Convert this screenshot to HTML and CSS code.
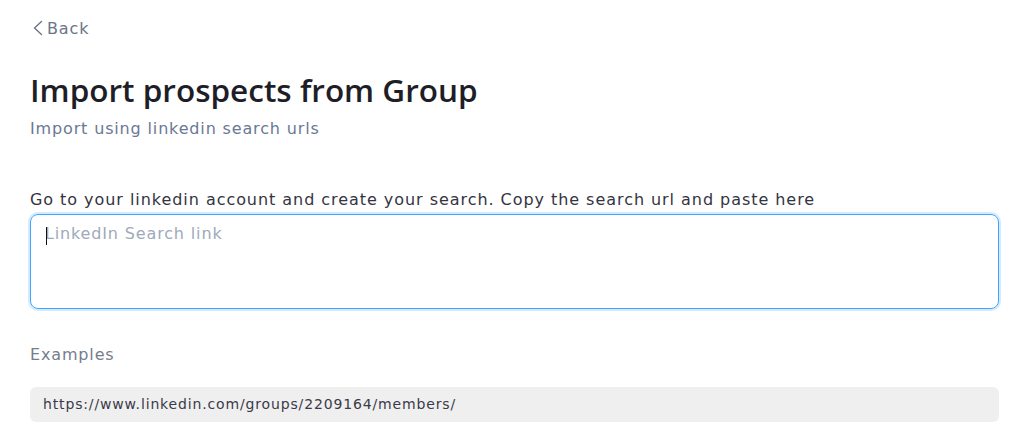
FILE: index.html
```html
<!DOCTYPE html>
<html lang="en">
<head>
    <meta charset="UTF-8">
    <meta name="viewport" content="width=device-width, initial-scale=1.0">
    <title>Import prospects from Group</title>
    <link rel="stylesheet" href="styles.css">
</head>
<body>
<div class="page">
    <a class="back-link" href="#">
        <svg width="12" height="16" viewBox="0 0 12 16" fill="none" stroke="currentColor" stroke-width="1.4" stroke-linecap="round" stroke-linejoin="round">
            <path d="M9.5 1.5 L2.5 8 L9.5 14.5"/>
        </svg>
        <span>Back</span>
    </a>

    <h1 class="page-title">Import prospects from Group</h1>
    <p class="page-subtitle">Import using linkedin search urls</p>

    <label class="field-label" for="search-link">Go to your linkedin account and create your search. Copy the search url and paste here</label>
    <div class="field-box">
        <span class="caret"></span>
        <span class="placeholder">LinkedIn Search link</span>
    </div>

    <p class="examples-title">Examples</p>
    <div class="example-item">https://www.linkedin.com/groups/2209164/members/</div>
</div>
</body>
</html>
```

FILE: styles.css
```css
body {
    margin: 0;
    padding: 0;
    background: #ffffff;
    font-family: "DejaVu Sans", "Noto Sans", sans-serif;
    letter-spacing: 0.85px;
}
.page {
    padding: 16px 33px 0 30px;
}
.back-link {
    display: flex;
    align-items: center;
    gap: 3px;
    color: #6b7589;
    text-decoration: none;
    font-size: 16px;
    height: 24px;
    padding-left: 2px;
}
.page-title {
    margin: 30px 0 0 0;
    font-family: "Open Sans", "Noto Sans", sans-serif;
    font-size: 31.5px;
    font-weight: 600;
    letter-spacing: 0;
    color: #1e1e28;
    line-height: 40px;
}
.page-subtitle {
    margin: 7px 0 0 0;
    font-size: 16px;
    color: #6b7894;
    line-height: 24px;
}
.field-label {
    display: block;
    margin-top: 47px;
    font-size: 16px;
    letter-spacing: 0.95px;
    color: #34343f;
    line-height: 24px;
}
.field-box {
    position: relative;
    margin-top: 2px;
    height: 95px;
    border: 1px solid #3ea6ff;
    border-radius: 8px;
    box-shadow: 0 0 0 2px #d4ebff;
    padding: 8px 14px;
    box-sizing: border-box;
}
.placeholder {
    font-size: 16px;
    color: #a0a9ba;
    line-height: 22px;
}
.caret {
    position: absolute;
    left: 15px;
    top: 12px;
    width: 1px;
    height: 18px;
    background: #111;
}
.examples-title {
    margin: 34px 0 0 0;
    font-size: 16px;
    color: #767d8c;
    line-height: 24px;
}
.example-item {
    margin-top: 20px;
    background: #f0eff0;
    border-radius: 6px;
    padding: 0 13px;
    height: 35px;
    line-height: 35px;
    font-size: 14px;
    color: #3a3a48;
}
```
